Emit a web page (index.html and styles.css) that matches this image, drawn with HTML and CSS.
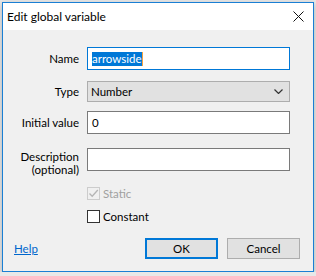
FILE: index.html
```html
<!DOCTYPE html>
<html lang="en">
<head>
  <meta charset="UTF-8" />
  <title>Edit global variable</title>
  <link rel="stylesheet" href="styles.css">
</head>
<body>
  <div class="dialog">
    <div class="titlebar">
      <span class="title">Edit global variable</span>
      <svg class="close" width="11" height="11" viewBox="0 0 11 11">
        <path d="M0.5 0.5 L10.5 10.5 M10.5 0.5 L0.5 10.5" stroke="#111" stroke-width="1" fill="none" />
      </svg>
    </div>

    <div class="content">
      <div class="row row-name">
        <label class="lbl">Name</label>
        <div class="input focused"><span class="sel">arrowside</span><span class="caret"></span></div>
      </div>

      <div class="row row-type">
        <label class="lbl">Type</label>
        <div class="select">
          <span>Number</span>
          <svg width="9" height="5" viewBox="0 0 9 5">
            <path d="M0.5 0.5 L4.5 4.5 L8.5 0.5" stroke="#333" stroke-width="1.2" fill="none" />
          </svg>
        </div>
      </div>

      <div class="row row-init">
        <label class="lbl">Initial value</label>
        <div class="input">0</div>
      </div>

      <div class="row row-desc">
        <label class="lbl lbl-desc">Description<br>(optional)</label>
        <div class="input"></div>
      </div>

      <div class="row row-static">
        <div class="check disabled">
          <span class="box">
            <svg width="11" height="11" viewBox="0 0 11 11">
              <path d="M1.5 5.5 L4.2 8.3 L9.8 2" stroke="#b4b4b4" stroke-width="1.3" fill="none" />
            </svg>
          </span>
          <span>Static</span>
        </div>
      </div>

      <div class="row row-const">
        <div class="check">
          <span class="box"></span>
          <span>Constant</span>
        </div>
      </div>

      <div class="footer">
        <a class="help" href="#">Help</a>
        <div class="buttons">
          <button class="btn btn-default">OK</button>
          <button class="btn">Cancel</button>
        </div>
      </div>
    </div>
  </div>
</body>
</html>
```

FILE: styles.css
```css
* {
  box-sizing: border-box;
}

body {
  margin: 0;
  background: #e8e8e8;
  font-family: Lato, "Open Sans", sans-serif;
  font-size: 11.5px;
  color: #000;
}

.dialog {
  margin: 2px 0 0 2px;
  width: 312px;
  height: 270px;
  border: 1px solid #1a7fd4;
  background: #f0f0f0;
  box-shadow: 0 2px 6px rgba(0,0,0,0.25);
  display: flex;
  flex-direction: column;
}

.titlebar {
  height: 27px;
  flex: none;
  background: #fff;
  display: flex;
  align-items: center;
  justify-content: space-between;
  padding: 0 9px 0 4px;
}

.title {
  font-size: 12px;
}

.content {
  flex: 1;
  display: flex;
  flex-direction: column;
  padding-top: 17px;
}

.row {
  display: flex;
  align-items: center;
  gap: 8px;
  padding-left: 84px;
}

.row .lbl {
  margin-left: -84px;
  width: 76px;
  text-align: right;
  line-height: 14px;
}

.row-name { height: 23px; }
.row-type { height: 21px; margin-top: 11px; }
.row-init { height: 23px; margin-top: 9px; }
.row-desc { height: 23px; margin-top: 14px; align-items: flex-start; }
.row-static { height: 13px; margin-top: 16px; }
.row-const { height: 13px; margin-top: 10px; }

.row .lbl-desc {
  line-height: 13px;
  margin-top: 2px;
}

.input {
  width: 203px;
  height: 23px;
  border: 1px solid #7a7a7a;
  background: #fff;
  padding: 0 4px;
  display: flex;
  align-items: center;
}

.input.focused {
  border-color: #0078d7;
}

.sel {
  background: #0078d7;
  color: #fff;
  line-height: 14px;
}

.caret {
  width: 1px;
  height: 14px;
  background: #f7a23c;
}

.select {
  width: 203px;
  height: 21px;
  border: 1px solid #adadad;
  background: #e1e1e1;
  padding: 0 6px 0 3px;
  display: flex;
  align-items: center;
  justify-content: space-between;
}

.check {
  display: flex;
  align-items: center;
  gap: 3px;
  line-height: 13px;
}

.box {
  width: 13px;
  height: 13px;
  border: 1px solid #333;
  background: #fff;
  display: flex;
  align-items: center;
  justify-content: center;
}

.disabled {
  color: #a0a0a0;
}

.disabled .box {
  border-color: #cccccc;
  background: #f0f0f0;
}

.footer {
  margin-top: 15px;
  padding: 0 13px 0 11px;
  display: flex;
  align-items: center;
  justify-content: space-between;
}

.help {
  color: #0066cc;
  text-decoration: underline;
}

.buttons {
  display: flex;
  gap: 9px;
}

.btn {
  width: 73px;
  height: 21px;
  border: 1px solid #adadad;
  background: #e1e1e1;
  font-family: inherit;
  font-size: 11.5px;
  color: #000;
  padding: 0;
}

.btn-default {
  border: 2px solid #0078d7;
}
```
